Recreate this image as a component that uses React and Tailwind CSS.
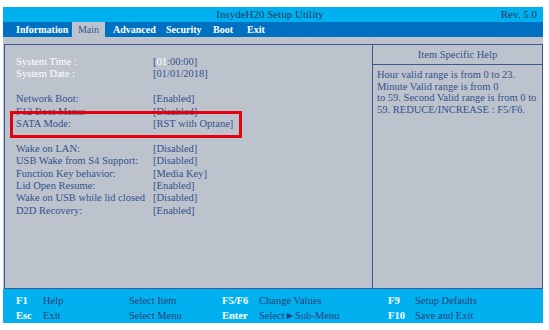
import React from 'react';

const rows = [
    { label: 'System Time :', value: 'time', white: true },
    { label: 'System Date :', value: '[01/01/2018]', white: true },
    null,
    { label: 'Network Boot:', value: '[Enabled]' },
    { label: 'F12 Boot Menu:', value: '[Disabled]' },
    { label: 'SATA Mode:', value: '[RST with Optane]' },
    null,
    { label: 'Wake on LAN:', value: '[Disabled]' },
    { label: 'USB Wake from S4 Support:', value: '[Disabled]' },
    { label: 'Function Key behavior:', value: '[Media Key]' },
    { label: 'Lid Open Resume:', value: '[Enabled]' },
    { label: 'Wake on USB while lid closed', value: '[Disabled]' },
    { label: 'D2D Recovery:', value: '[Enabled]' },
];

// widths pin each tab to its spot in the bar
const menu = [
    { name: 'Information', cls: 'w-[56px] text-white font-bold' },
    { name: 'Main', cls: 'w-[33px] justify-center bg-[#bcc3cc] text-[#3a5590]' },
    { name: 'Advanced', cls: 'w-[61px] pl-[8px] text-white font-bold' },
    { name: 'Security', cls: 'w-[47px] text-white font-bold' },
    { name: 'Boot', cls: 'w-[34px] text-white font-bold' },
    { name: 'Exit', cls: 'w-[30px] text-white font-bold' },
];

const FooterKey = ({ k, text, kw, tw }) => (
    <div className="flex">
        <span className={`font-bold text-white ${kw}`}>{k}</span>
        <span className={`text-[#2b3f78] ${tw}`}>{text}</span>
    </div>
);

export default function App() {
    return (
        <div className="w-[549px] h-[330px] bg-white pt-[7px] pl-[3px] font-['Liberation_Serif',serif] text-[11px]">
            <div className="w-[540px]">
                {/* title bar */}
                <div className="h-[15px] bg-[#00b0ef] flex items-center justify-between text-[#1f3864] pr-[6px]">
                    <span className="w-[70px]"></span>
                    <span className="leading-none">InsydeH20 Setup Utility</span>
                    <span className="w-[70px] text-right leading-none">Rev. 5.0</span>
                </div>

                {/* menu bar */}
                <div className="h-[15px] bg-[#0070c0] flex items-stretch pl-[13px] text-[10px]">
                    {menu.map((m) => (
                        <div key={m.name} className={`flex items-center leading-none ${m.cls}`}>{m.name}</div>
                    ))}
                </div>

                {/* main panel */}
                <div className="h-[252px] bg-[#bcc3cc] pt-[7px] pl-[1px]">
                    <div className="relative h-[245px] w-[539px] border border-[#3b5896] flex">
                        <div className="w-[368px] border-r border-[#3b5896] pt-[11px] pl-[11px] text-[#34518f] text-[10.5px]">
                            {rows.map((r, i) => r ? (
                                <div key={i} className="grid grid-cols-[137px_1fr] h-[12.4px] leading-[12.4px] whitespace-nowrap">
                                    <span className={r.white ? 'text-white' : ''}>{r.label}</span>
                                    {r.value === 'time' ? (
                                        <span>[<span className="text-white">01</span>:00:00]</span>
                                    ) : (
                                        <span>{r.value}</span>
                                    )}
                                </div>
                            ) : (
                                <div key={i} className="h-[12.4px]"></div>
                            ))}
                        </div>
                        <div className="flex-1 text-[#34518f]">
                            <div className="h-[20px] border-b border-[#3b5896] flex items-center justify-center text-[10.5px]">Item Specific Help</div>
                            <div className="pl-[4px] pt-[4px] leading-[11.5px] text-[10.5px]">
                                <div>Hour valid range is from 0 to 23.</div>
                                <div>Minute Valid range is from 0</div>
                                <div>to 59. Second Valid range is from 0 to</div>
                                <div>59. REDUCE/INCREASE : F5/F6.</div>
                            </div>
                        </div>
                        {/* red annotation box */}
                        <div className="absolute left-[5px] top-[66px] w-[232px] h-[27px] border-[3px] border-[#e3000f]"></div>
                    </div>
                </div>

                {/* footer */}
                <div className="h-[34px] bg-[#00b0ef] pl-[13px] pt-[6px] flex flex-col gap-[3px] text-[10.5px] leading-[12px]">
                    <div className="flex">
                        <FooterKey k="F1" text="Help" kw="w-[27px]" tw="w-[86px]" />
                        <span className="w-[93px] text-[#2b3f78]">Select Item</span>
                        <FooterKey k="F5/F6" text="Change Values" kw="w-[37px]" tw="w-[129px]" />
                        <FooterKey k="F9" text="Setup Defaults" kw="w-[27px]" tw="" />
                    </div>
                    <div className="flex">
                        <FooterKey k="Esc" text="Exit" kw="w-[27px]" tw="w-[86px]" />
                        <span className="w-[93px] text-[#2b3f78]">Select Menu</span>
                        <FooterKey k="Enter" text="Select►Sub-Menu" kw="w-[37px]" tw="w-[129px]" />
                        <FooterKey k="F10" text="Save and Exit" kw="w-[27px]" tw="" />
                    </div>
                </div>
            </div>
        </div>
    );
}
